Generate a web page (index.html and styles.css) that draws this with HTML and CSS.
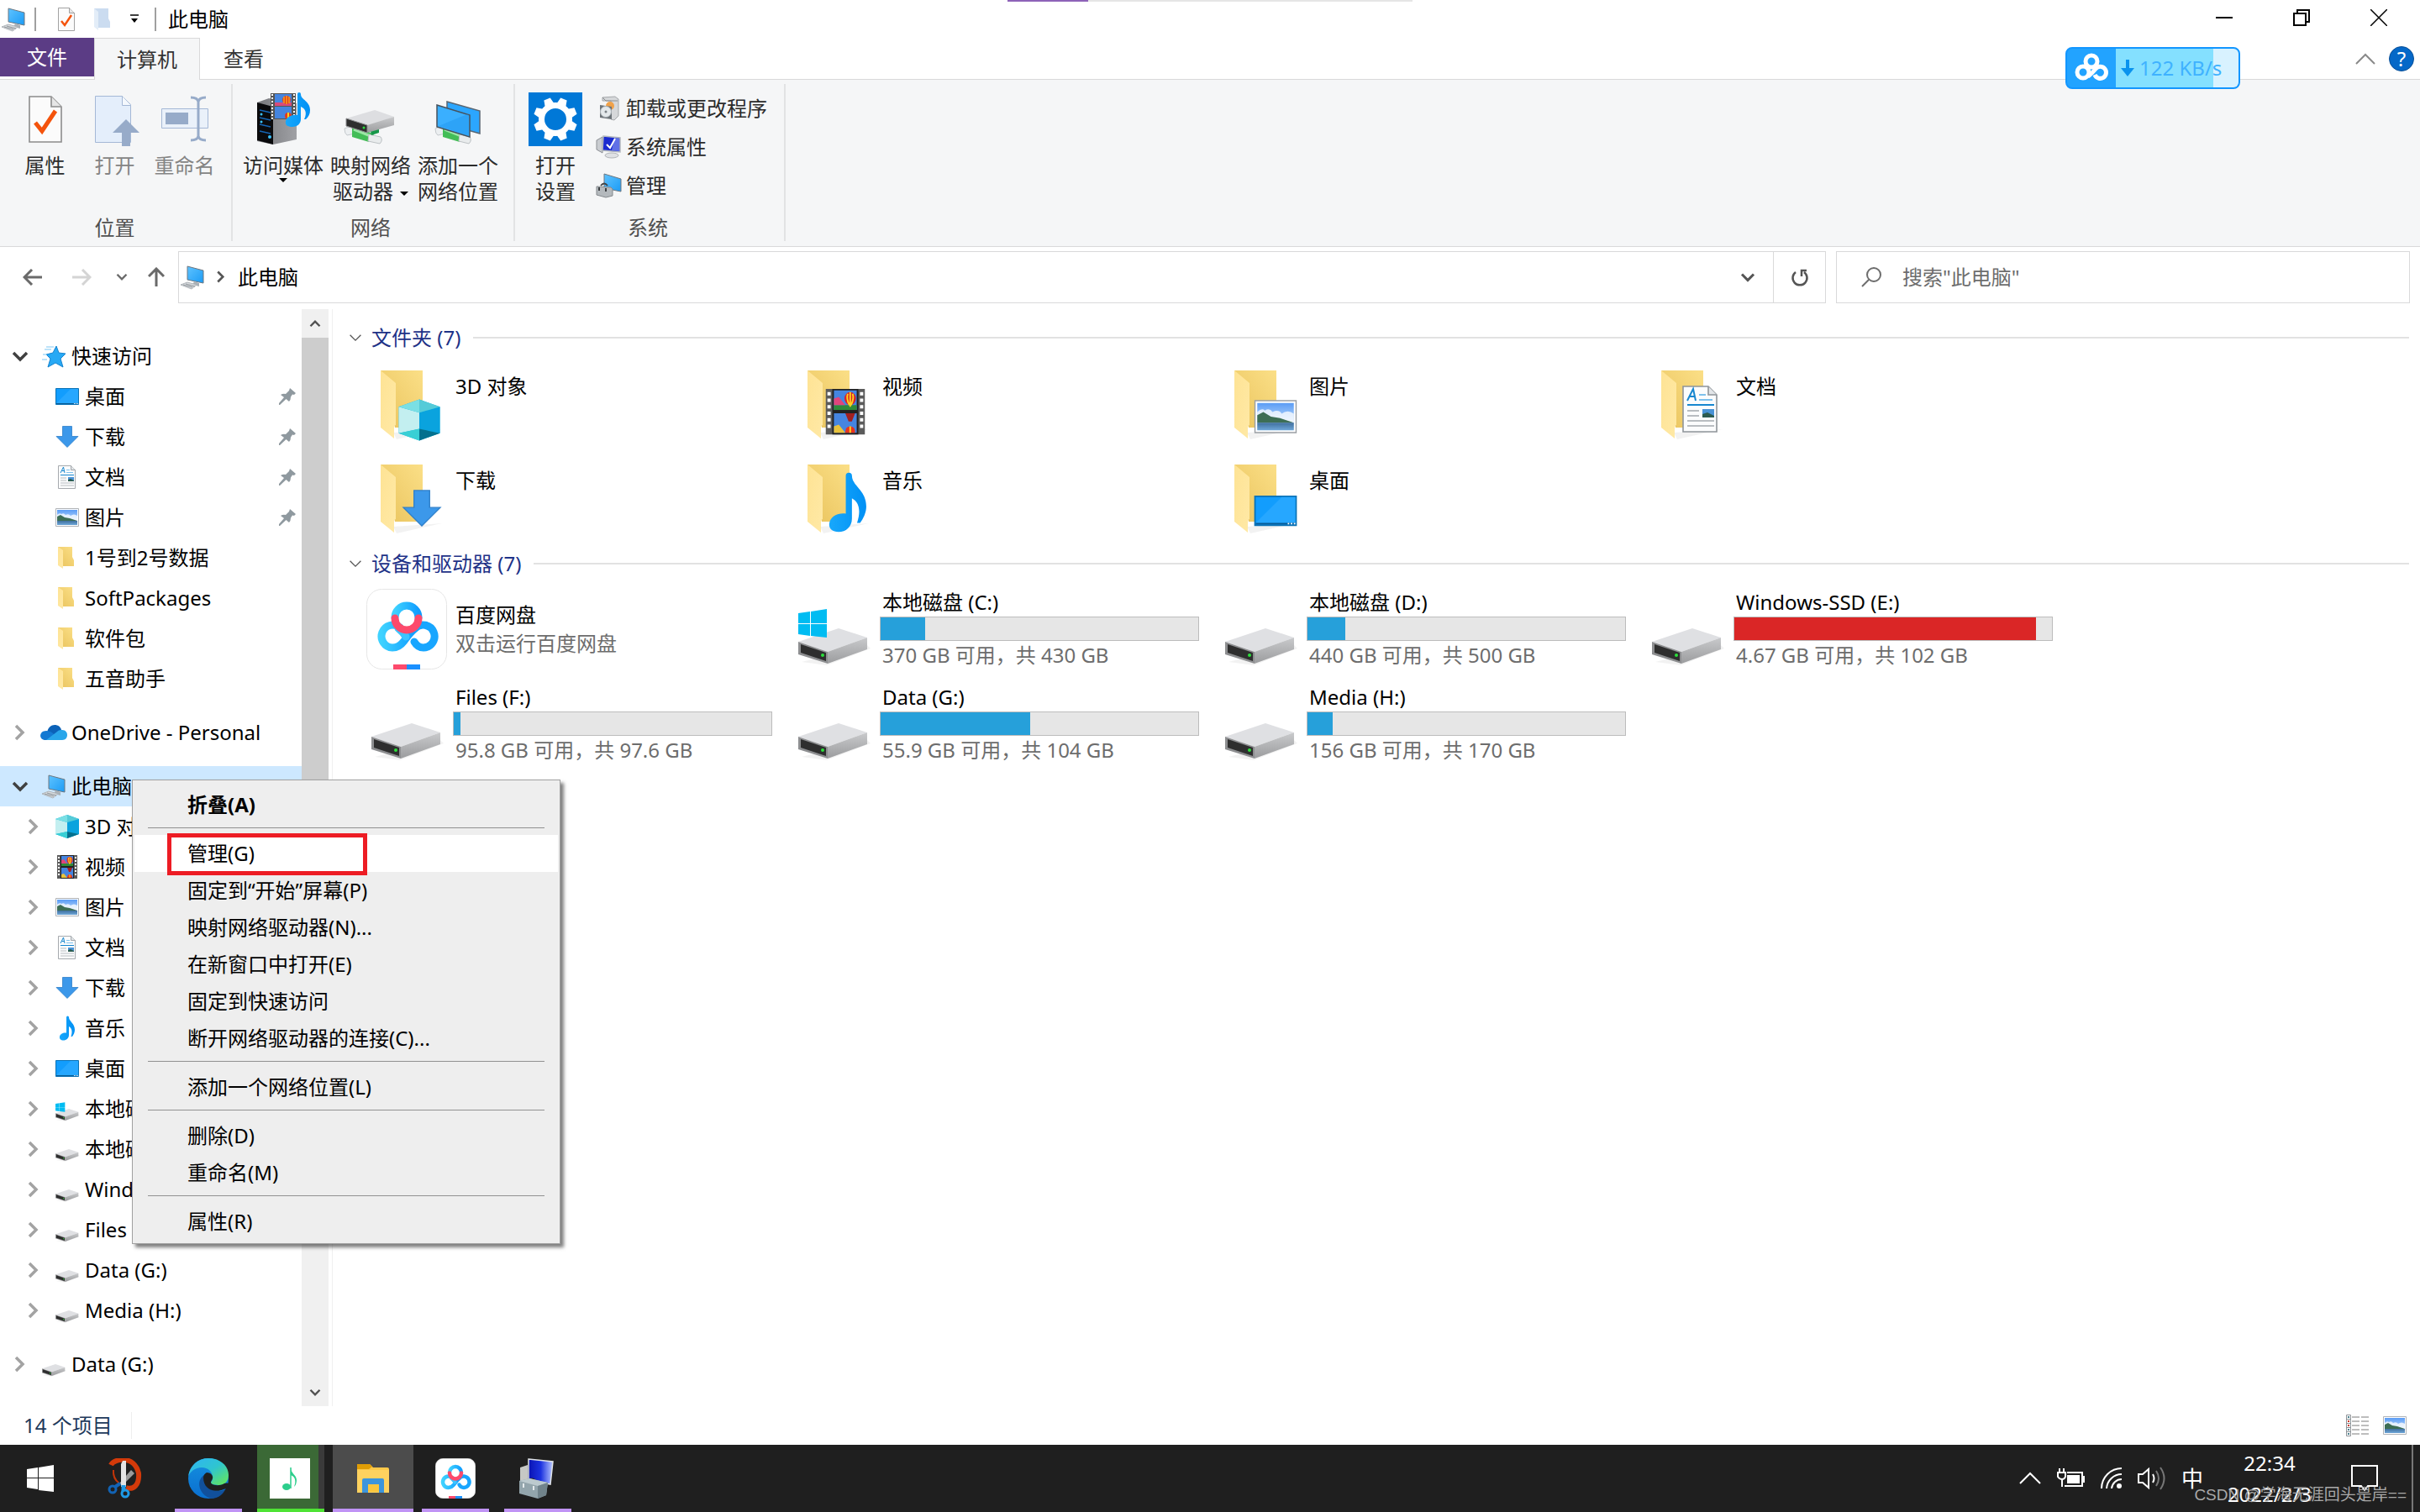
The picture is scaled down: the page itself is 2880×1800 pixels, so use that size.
FILE: index.html
```html
<!DOCTYPE html>
<html lang="zh-CN">
<head>
    <meta charset="UTF-8">
    <meta name="viewport" content="width=device-width, initial-scale=1.0">
    <title>此电脑</title>
    <link rel="stylesheet" href="styles.css">
</head>
<body>
    <!-- Icon sprite -->
    <svg class="sprite" aria-hidden="true">
        <defs>
            <linearGradient id="gFolderBack" x1="0" y1="1" x2="1" y2="0"><stop offset="0" stop-color="#e9c35c"/><stop offset="1" stop-color="#fbdf87"/></linearGradient>
            <linearGradient id="gFolderFront" x1="0" y1="0" x2="1" y2="1"><stop offset="0" stop-color="#fee394"/><stop offset="1" stop-color="#ffe9a6"/></linearGradient>
            <linearGradient id="gScreen" x1="0" y1="0" x2="1" y2="1"><stop offset="0" stop-color="#5fc3ff"/><stop offset="1" stop-color="#1b9bf5"/></linearGradient>
            <linearGradient id="gSky" x1="0" y1="0" x2="0" y2="1"><stop offset="0" stop-color="#5a9cf5"/><stop offset="1" stop-color="#e8f5ff"/></linearGradient>
            <linearGradient id="gSea" x1="0" y1="0" x2="0" y2="1"><stop offset="0" stop-color="#3f6f9e"/><stop offset="1" stop-color="#6fa7d8"/></linearGradient>
            <linearGradient id="gSide" x1="0" y1="0" x2="0" y2="1"><stop offset="0" stop-color="#c9cacc"/><stop offset="1" stop-color="#9b9c9e"/></linearGradient>
            <linearGradient id="gNote" x1="0" y1="0" x2="1" y2="0"><stop offset="0" stop-color="#18a8fb"/><stop offset="1" stop-color="#0090f5"/></linearGradient>
            <linearGradient id="gBaidu" x1="0" y1="0" x2="1" y2="0"><stop offset="0" stop-color="#3fd2ff"/><stop offset="1" stop-color="#109dff"/></linearGradient>
            <linearGradient id="gEdgeTop" x1="0" y1="0" x2="1" y2="1"><stop offset="0" stop-color="#2fb4f5"/><stop offset=".5" stop-color="#2fc5d0"/><stop offset="1" stop-color="#6ae94e"/></linearGradient>
            <linearGradient id="gEdgeLow" x1="0" y1="0" x2="0" y2="1"><stop offset="0" stop-color="#1590df"/><stop offset="1" stop-color="#0a6fd0"/></linearGradient>
            <linearGradient id="gBlueScreen" x1="0" y1="0" x2="1" y2="0"><stop offset="0" stop-color="#0a14b4"/><stop offset=".5" stop-color="#1c33e0"/><stop offset="1" stop-color="#b9c8ff"/></linearGradient>
            <linearGradient id="gTower" x1="0" y1="0" x2="1" y2="0"><stop offset="0" stop-color="#77787c"/><stop offset="1" stop-color="#a0a1a5"/></linearGradient>
        </defs>

        <symbol id="pc" viewBox="0 0 32 32">
            <path d="M10 3l19 5v15l-19-4z" fill="url(#gScreen)" stroke="#6d7780"/>
            <path d="M18 21l6 2v4l-8-2z" fill="#a9b0b6"/>
            <path d="M2 25l8-3 11 3-6 5z" fill="#d9dcdf" stroke="#aeb3b8"/>
            <path d="M5 25l11 3M8 24l11 3" stroke="#8f959a" fill="none"/>
        </symbol>
        <symbol id="checkdoc" viewBox="0 0 32 32">
            <path d="M6.500 2.500h13l6 6v21h-19z" fill="#fbfbfb" stroke="#8c8c8c" stroke-width=".8"/>
            <path d="M19.500 2.500v6h6" fill="#e6e6e6" stroke="#8c8c8c" stroke-width=".8"/>
            <path d="M10 18l4 5 8-12" fill="none" stroke="#f4530c" stroke-width="2.500"/>
        </symbol>
        <symbol id="folder" viewBox="0 0 32 32">
            <path d="M5 3h17v12l2 4v7H8z" fill="url(#gFolderBack)"/>
            <path d="M5 3l6 4v22l-6-4z" fill="url(#gFolderFront)"/>
        </symbol>
        <symbol id="folder-pale" viewBox="0 0 32 32">
            <path d="M5 3h17v12l2 4v7H8z" fill="#cbdcf0"/>
            <path d="M5 3l5 4v22l-5-4z" fill="#e3edf8"/>
        </symbol>
        <symbol id="star" viewBox="0 0 32 32">
            <path d="M19 4l3 8 8 1-6 6 3 10-9-5-9 5 3-10-5-5 8-2z" fill="#27a9f5" stroke="#1583cf"/>
            <path d="M7 5h9M5 8h8M3 14h5M2 20h6" stroke="#7cc8f5" stroke-width="1"/>
        </symbol>
        <symbol id="desktop" viewBox="0 0 32 32">
            <path d="M2.500 6.500h27v19h-27z" fill="#129dfd" stroke="#0b72b5"/>
            <path d="M3 24L20 7h9v17z" fill="#2fabff" opacity=".7"/>
            <path d="M3 24.500h26" stroke="#085c96"/>
            <path d="M24 24.500h1m1 0h1m1 0h1" stroke="#fff"/>
        </symbol>
        <symbol id="download" viewBox="0 0 32 32">
            <path d="M10.500 3.500h11v12h7.500l-13 13-13-13h7.500z" fill="#3c98ea" stroke="#2f7fc9" stroke-width=".8"/>
        </symbol>
        <symbol id="doc" viewBox="0 0 32 32">
            <path d="M5.500 2.500h15l5 5v22h-20z" fill="#fbfcfd" stroke="#8f9499" stroke-width=".8"/>
            <path d="M20.500 2.500v5h5" fill="#e2e5e8" stroke="#8f9499" stroke-width=".8"/>
            <path d="M8 11l3.500-7 1.500 7M9.500 8.500h3" fill="none" stroke="#1787cf"/>
            <path d="M15 7.500h4M15 10.500h8" stroke="#7fc1ec"/>
            <path d="M8 13.500h16" stroke="#1787cf"/>
            <path d="M8 17h7M8 20h7M8 23h16M8 26h16" stroke="#b9bdc1"/>
            <path d="M17 16h7v5h-7z" fill="#4a93d6"/>
            <path d="M17 19l3-1 4 2v1h-7z" fill="#2c5c50"/>
        </symbol>
        <symbol id="picture" viewBox="0 0 32 32">
            <path d="M2.500 5.500h27v21h-27z" fill="#fff" stroke="#9a9fa4" stroke-width=".8"/>
            <path d="M4 7h24v18H4z" fill="url(#gSky)"/>
            <path d="M4 13q3-3 5-1 3-2 5 1 4-2 6 1 4-3 8 0v6H4z" fill="#fff" opacity=".75"/>
            <path d="M4 15l4-2 5 3 6 1 9 3H4z" fill="#3d6e55"/>
            <path d="M4 20h24v5H4z" fill="url(#gSea)"/>
        </symbol>
        <symbol id="cube" viewBox="0 0 32 32">
            <path d="M16 2l14 5v18l-14 5-14-5V7z" fill="#18b5dc"/>
            <path d="M2 7l14 4v11L2 25z" fill="#c3eff0"/>
            <path d="M30 7l-14 4v11l14 3z" fill="#0aa3de"/>
            <path d="M16 2l14 5-14 4z" fill="#55cbd8"/>
            <path d="M16 2L2 7l14 4z" fill="#7adfe4"/>
            <path d="M2 25l14-3v8z" fill="#39cfd5"/>
            <path d="M30 25l-14-3v8z" fill="#04708e"/>
        </symbol>
        <symbol id="film" viewBox="0 0 32 32">
            <path d="M4 2h24v28H4z" fill="#5b5b5b"/>
            <path d="M6 4v24M26 4v24" stroke="#fff" stroke-width="2" stroke-dasharray="2 2"/>
            <path d="M8 2h16v28H8z" fill="#222"/>
            <path d="M9 3h14v12H9zM9 17h14v12H9z" fill="#4585e0"/>
            <path d="M9 12h14v3H9z" fill="#2f8a3a"/>
            <path d="M9 8l3-1 4 5H9z" fill="#e0457c"/>
            <path d="M9 25l3-1 4 5H9z" fill="#e8c23c"/>
            <ellipse cx="19" cy="8" rx="3.500" ry="4" fill="#d8202a"/>
            <path d="M19 4v9M17.500 5q-1 3 1 7M20.500 5q1 3-1 7" stroke="#ffd21e" fill="none"/>
            <path d="M16 17h6l-2 5h-2z" fill="#a22020"/>
            <path d="M16 29q0-4 3-4t3 4z" fill="#e8341e"/>
            <path d="M19 25v4" stroke="#ffd21e"/>
        </symbol>
        <symbol id="note" viewBox="0 0 32 32">
            <path d="M15 3q0-1.500 1.500-1.500T18 3c0 5 7 7 7 15 0 3-1.500 6-3 8h-1.500c2-6 1-10-2.500-12v10c0 4-3 6.500-6.500 6.500S6.500 28.500 7 26c.5-3 4-5 8-4.500z" fill="url(#gNote)"/>
        </symbol>
        <symbol id="drive" viewBox="0 0 96 96">
            <path d="M10 88l30 4 52-20-4-4z" fill="#000" opacity=".05"/>
            <path d="M6 64l48-16 34 11-47 17z" fill="#dfe0e3"/>
            <path d="M88 59v14L41 90V76z" fill="url(#gSide)"/>
            <path d="M6 64l35 12v14L6 79z" fill="#8d8e90"/>
            <path d="M9 67l30 10v10L9 77z" fill="#2e2e2e"/>
            <circle cx="35" cy="80" r="2" fill="#2be03a"/>
        </symbol>
        <symbol id="windrive" viewBox="0 0 96 96">
            <use href="#drive" width="96" height="96"/>
            <path d="M6 30l14-2v14H6zM21 28l19-3v17H21zM6 43h14v14l-14-2zM21 43h19v16l-19-2z" fill="#00bcf2"/>
        </symbol>
        <symbol id="onedrive" viewBox="0 0 32 32">
            <path d="M8 16c1-6 5-9 9-9s7 2 8 6l-8 8z" fill="#0c62b8"/>
            <path d="M6 25c-8 0-8-11 1-11 3 0 6 1 8 3l8 8z" fill="#1379d2"/>
            <path d="M7 25l13-10c2-2 4-2 6-2 8 0 8 12 0 12z" fill="#29a6ea"/>
        </symbol>
        <symbol id="chev-right" viewBox="0 0 16 20">
            <path d="M3 2l8 8-8 8" fill="none" stroke="currentColor" stroke-width="3.500"/>
        </symbol>
        <symbol id="chev-down" viewBox="0 0 20 16">
            <path d="M2 4l8 8 8-8" fill="none" stroke="currentColor" stroke-width="3.500"/>
        </symbol>
        <symbol id="chev-thin" viewBox="0 0 20 12">
            <path d="M2 2l8 8 8-8" fill="none" stroke="currentColor" stroke-width="1.600"/>
        </symbol>
        <symbol id="pin" viewBox="0 0 20 20">
            <path d="M13 0l7 6-2 2-2-.5-2 3q0 4-2 5.500L8.500 13 1 20H0v-2l6-7-4-3q3-2 6-1l4-4z" fill="#8f999f"/>
        </symbol>

        <!-- Folder tiles: the open folder with a badge in the lower right -->
        <symbol id="bigfolder" viewBox="0 0 96 96">
            <path d="M32 84l58-4-54 12z" fill="#000" opacity=".05"/>
            <path d="M17 10h50v68H34z" fill="url(#gFolderBack)"/>
            <path d="M17 10l18 15v50l-2 1v15L17 78z" fill="url(#gFolderFront)"/>
        </symbol>
        <symbol id="baidu" viewBox="0 0 96 96">
            <rect x=".5" y=".5" width="95" height="95" rx="18" fill="#fff" stroke="#e6e6e6"/>
            <g fill="none" stroke-width="9" stroke-linecap="round">
                <path d="M58 47q-6 5-13 15-6 8-14 8a13.500 13.500 0 1 1 9-24" stroke="url(#gBaidu)"/>
                <path d="M38 47q5 4 9 10" stroke="#3cc4ff"/>
                <path d="M57 63q4 7 11 7a13.500 13.500 0 1 0-10-23" stroke="#18a6ff"/>
                <path d="M34 34a14 14 0 0 1 28 0" stroke="url(#gBaidu)"/>
                <path d="M34 35a14 14 0 0 0 28 0" stroke="#fd4a6c"/>
            </g>
            <path d="M32 90h16v6H32z" fill="#fd4a6c"/>
            <path d="M48 90h16v6H48z" fill="#1a90ff"/>
        </symbol>

        <!-- Ribbon -->
        <symbol id="r-open" viewBox="0 0 64 64">
            <path d="M8.500 4.500h32l10 10v45h-42z" fill="#e4eefb" stroke="#a4b8d6"/>
            <path d="M40.500 4.500v11h10" fill="#f4f8fd" stroke="#a4b8d6"/>
            <path d="M45 32l16 16H50v16H40V48H29z" fill="#97abc9"/>
        </symbol>
        <symbol id="r-rename" viewBox="0 0 64 64">
            <path d="M4.500 19.500h55v23h-55z" fill="#eaf1fa" stroke="#a4b8d6"/>
            <path d="M9 24h27v14H9z" fill="#97abc9"/>
            <path d="M39 6q8 0 9 5 1-5 9-5M48 10v42M39 57q8 0 9-5 1 5 9 5" fill="none" stroke="#97abc9" stroke-width="3"/>
        </symbol>
        <symbol id="r-media" viewBox="0 0 64 64">
            <path d="M1 12l14-5 33 6v43L20 62 1 58z" fill="url(#gTower)"/>
            <path d="M1 12l19 5v45L1 57z" fill="#0a0a0c"/>
            <path d="M4 21l13 3M4 30l13 3M4 38l13 3M4 46l13 3" stroke="#1565b5" stroke-width="1.500"/>
            <circle cx="16" cy="53" r="2" fill="#3ac2ff"/>
            <circle cx="6" cy="26" r="1.500" fill="#3ac2ff"/><circle cx="6" cy="35" r="1.500" fill="#3ac2ff"/>
            <path d="M17 1h30v31H17z" fill="#555"/>
            <path d="M19 2v30M45 2v30" stroke="#fff" stroke-width="2" stroke-dasharray="2 2"/>
            <path d="M22 2h20v14H22zM22 17h20v14H22z" fill="#4585e0"/>
            <path d="M22 12h20v4H22z" fill="#d84a7c"/>
            <circle cx="36" cy="9" r="5" fill="#e33a1d"/><path d="M36 4v10M33 5v8M39 5v8" stroke="#ffd21e"/>
            <circle cx="38" cy="28" r="4" fill="#e33a1d"/><path d="M38 24v7" stroke="#ffd21e" stroke-width="2"/>
            <path d="M49 2q0-2 2-2t2 2c0 7 11 8 11 19 0 5-2 8-5 11h-2c4-8 1-13-4-15v15c0 5-4 9-10 9s-9-2-8-7c1-5 8-8 14-7z" fill="url(#gNote)"/>
        </symbol>
        <symbol id="r-mapdrive" viewBox="0 0 64 64">
            <path d="M1 43l8-3 4 9-9 2q-3-2-3-8z" fill="#eceff1" stroke="#c4c9cc"/>
            <path d="M10 41l12 2 14 7-6 9-20-6z" fill="#43bd57"/>
            <path d="M12 44l20 8" stroke="#9be6a5" stroke-width="3"/>
            <path d="M30 50l14 3q3 4-1 8l-14-3z" fill="#e9eced" stroke="#bcc1c4"/>
            <path d="M32 46l10-3v5l-9 3z" fill="#17974a"/>
            <path d="M3 31l34-10 23 8-32 12z" fill="#dddee1"/>
            <path d="M60 29v10L28 48v-9z" fill="url(#gSide)"/>
            <path d="M3 31l25 8v9L3 40z" fill="#2e2e2e" stroke="#8d8e90"/>
            <circle cx="24" cy="42" r="1.500" fill="#2be03a"/>
        </symbol>
        <symbol id="r-addnet" viewBox="0 0 64 64">
            <path d="M5 43l8-3 4 9-9 2q-3-2-3-8z" fill="#eceff1" stroke="#c4c9cc"/>
            <path d="M14 41l12 2 14 7-6 9-20-6z" fill="#43bd57"/>
            <path d="M16 44l20 8" stroke="#9be6a5" stroke-width="3"/>
            <path d="M34 50l12 3q3 4-1 8l-12-3z" fill="#e9eced" stroke="#bcc1c4"/>
            <path d="M19 11l39 11v27l-39-11z" fill="#2ba6ff" stroke="#596673" stroke-width="1.500"/>
            <path d="M7 15l39 12v26L7 41z" fill="#3aafff" stroke="#47525c" stroke-width="1.500"/>
            <path d="M9 40l34-14 2 1v25z" fill="#1f98f0" opacity=".5"/>
        </symbol>
        <symbol id="r-gear" viewBox="0 0 64 64">
            <path d="M0 0h64v64H0z" fill="#0078d7"/>
            <circle cx="32" cy="32" r="16.500" fill="none" stroke="#fff" stroke-width="7"/>
            <g fill="#fff" transform="rotate(22.500 32 32)">
                <path id="tooth" d="M28 6h8l2 9H26z"/>
                <use href="#tooth" transform="rotate(45 32 32)"/>
                <use href="#tooth" transform="rotate(90 32 32)"/>
                <use href="#tooth" transform="rotate(135 32 32)"/>
                <use href="#tooth" transform="rotate(180 32 32)"/>
                <use href="#tooth" transform="rotate(225 32 32)"/>
                <use href="#tooth" transform="rotate(270 32 32)"/>
                <use href="#tooth" transform="rotate(315 32 32)"/>
            </g>
        </symbol>
        <symbol id="r-uninstall" viewBox="0 0 32 32">
            <path d="M8 3l15-1 4 3v20l-5 5-4-1V7H8z" fill="#d6d8da" stroke="#a5a8ab"/>
            <path d="M8 3l4 4h14" fill="none" stroke="#8b8e91"/>
            <circle cx="17" cy="13" r="5" fill="#f0a24a"/>
            <path d="M5 12l14 2v15L5 27z" fill="#6c7378"/>
            <circle cx="12" cy="20" r="6.500" fill="#e4e9ec" stroke="#a9b0b5"/>
            <circle cx="12" cy="20" r="1.500" fill="#7b8287"/>
        </symbol>
        <symbol id="r-sysprop" viewBox="0 0 32 32">
            <path d="M1 8l7-4v19l-7-4z" fill="#c9ccd0" stroke="#8c9095"/>
            <path d="M9 3l20 2v17L8 20z" fill="#1a2bd0" stroke="#b4b9be" stroke-width="1.500"/>
            <path d="M22 5l6 1v15l-9-1z" fill="#8f9ef5" opacity=".6"/>
            <path d="M13 13l4 4 6-11" fill="none" stroke="#fff" stroke-width="2"/>
            <ellipse cx="19" cy="26" rx="8" ry="3" fill="#dfe1e4" stroke="#b1b4b8"/>
        </symbol>
        <symbol id="r-manage" viewBox="0 0 32 32">
            <path d="M10 2l20 6v15l-20-4z" fill="url(#gScreen)" stroke="#6d7780"/>
            <path d="M6 16q4-5 8 0" fill="none" stroke="#444" stroke-width="2"/>
            <path d="M1 17l17 1 2 2v8l-8 2-11-3z" fill="#b4b9bd" stroke="#84898d"/>
            <path d="M4 18v4M12 19v4" stroke="#3c3f42" stroke-width="2"/>
        </symbol>

        <!-- Taskbar -->
        <symbol id="t-start" viewBox="0 0 32 32">
            <path d="M0 5l13-2v12H0zM14 3l18-3v15H14zM0 16h13v13L0 27zM14 16h18v16l-18-2z" fill="#fff"/>
        </symbol>
        <symbol id="t-snip" viewBox="0 0 48 48">
            <path d="M6 8c4-8 28-12 33 10 1 14-6 20-15 17" fill="none" stroke="#d33a0a" stroke-width="6"/>
            <path d="M9 14q-1 10 7 16" fill="none" stroke="#c03408" stroke-width="2"/>
            <path d="M30 14l4 4-14 14-4-2z" fill="#9b9b9b"/>
            <path d="M20 3l4 0v31h-6V7z" fill="#e4e4e4"/>
            <circle cx="8" cy="37" r="4" fill="none" stroke="#1263b4" stroke-width="3"/>
            <path d="M11 34l6-4" stroke="#1263b4" stroke-width="4"/>
            <circle cx="23" cy="42" r="4" fill="none" stroke="#1e9ae6" stroke-width="3"/>
            <path d="M21 32v7" stroke="#1e9ae6" stroke-width="5"/>
        </symbol>
        <symbol id="t-edge" viewBox="0 0 48 48">
            <circle cx="24" cy="24" r="24" fill="url(#gEdgeLow)"/>
            <path d="M0 22C2 8 12 0 24 0c14 0 24 9 24 20 0 8-5 12-12 12-5 0-9-1-9-3 0-1 2-2 2-6C29 16 24 11 16 11 8 11 2 16 0 22z" fill="url(#gEdgeTop)"/>
            <path d="M19 20c-12 8-4 27 10 28 8-1 13-6 15-11-6 4-25 4-25-17z" fill="#11509c"/>
            <path d="M18 23c0-3 2-5 4-6 5 0 8 4 7 7-1 3-2 3-2 5 0 3 10 5 16 1 3-1 6-1 5 3l-2 3-4 1c-8 4-24 2-24-14z" fill="#1f1f1f"/>
        </symbol>
        <symbol id="t-music" viewBox="0 0 48 48">
            <path d="M0 0h48v48H0z" fill="#fff"/>
            <path d="M25 11v25" stroke="#2cce8c" stroke-width="1.500"/>
            <path d="M25 11c0 7 7 9 7 15q0 5-3 8 4-11-4-14z" fill="#2cce8c"/>
            <ellipse cx="20" cy="34" rx="5" ry="4" fill="#2cce8c"/>
        </symbol>
        <symbol id="t-explorer" viewBox="0 0 48 48">
            <path d="M5 9q0-2 2-2h13l4 4h17q2 0 2 2v27H5z" fill="#fdc94a"/>
            <path d="M5 7h15l3 3-4 3H5z" fill="#e09d05"/>
            <path d="M5 14h38v27H5z" fill="#fed25f"/>
            <path d="M11 26q0-2 2-2h22q2 0 2 2v15h-6V31H18v10h-7z" fill="#3c95dc"/>
            <path d="M18 31h13v9H18z" fill="#fbc63d"/>
        </symbol>
        <symbol id="t-computer" viewBox="0 0 48 48">
            <path d="M3 11l9-3v22l-9 3z" fill="#c6c8c5"/>
            <path d="M13 1l29 3-3 27-26-5z" fill="url(#gBlueScreen)" stroke="#e0e3e6" stroke-width="1.500"/>
            <path d="M13 28q3-7 10 0" fill="none" stroke="#2b2b2b" stroke-width="2"/>
            <path d="M2 27l12-3 22 5-2 15-10 4L2 42z" fill="#93a5ac"/>
            <path d="M2 27l12-3 22 5-12 4z" fill="#bccace"/>
            <path d="M24 33l12-4-2 15-10 4z" fill="#71838b"/>
            <path d="M7 30v5M19 33v5" stroke="#e4eaec" stroke-width="2"/>
        </symbol>
    </svg>

    <header class="titlebar">
        <svg class="icon"><use href="#pc"/></svg>
        <span class="title-sep"></span>
        <button class="quick" aria-label="属性"><svg class="icon"><use href="#checkdoc"/></svg></button>
        <button class="quick" aria-label="新建文件夹"><svg class="icon"><use href="#folder-pale"/></svg></button>
        <button class="quick quick-more" aria-label="自定义快速访问工具栏"><svg width="12" height="12" viewBox="0 0 12 12"><path d="M1 1h10" stroke="#000" stroke-width="1.500"/><path d="M2 5h8l-4 5z"/></svg></button>
        <span class="title-sep"></span>
        <h1 class="title">此电脑</h1>
        <div class="window-buttons">
            <button aria-label="最小化"><svg width="20" height="20" viewBox="0 0 20 20"><path d="M0 10h20" stroke="#000" stroke-width="2"/></svg></button>
            <button aria-label="还原"><svg width="20" height="20" viewBox="0 0 20 20"><path d="M1 5h14v14H1zM5 5V1h14v14h-4" fill="none" stroke="#000" stroke-width="2"/></svg></button>
            <button aria-label="关闭"><svg width="20" height="20" viewBox="0 0 20 20"><path d="M0 0l20 20M20 0L0 20" stroke="#000" stroke-width="1.500"/></svg></button>
        </div>
    </header>

    <nav class="tabs">
        <button class="tab tab-file">文件</button>
        <button class="tab tab-active">计算机</button>
        <button class="tab">查看</button>
        <div class="tabs-right">
            <button aria-label="最小化功能区"><svg width="24" height="14" viewBox="0 0 24 14"><path d="M1 13L12 2l11 11" fill="none" stroke="#8a8a8a" stroke-width="2"/></svg></button>
            <button class="help" aria-label="帮助">?</button>
        </div>
    </nav>

    <section class="ribbon">
        <div class="ribbon-group group-location">
            <div class="ribbon-items">
                <button class="big-btn"><svg class="icon-lg"><use href="#checkdoc"/></svg>属性</button>
                <button class="big-btn" disabled><svg class="icon-lg"><use href="#r-open"/></svg>打开</button>
                <button class="big-btn" disabled><svg class="icon-lg"><use href="#r-rename"/></svg>重命名</button>
            </div>
            <p class="group-name">位置</p>
        </div>
        <div class="ribbon-group group-network">
            <div class="ribbon-items">
                <button class="big-btn"><svg class="icon-lg"><use href="#r-media"/></svg>访问媒体<span class="caret"></span></button>
                <button class="big-btn"><svg class="icon-lg"><use href="#r-mapdrive"/></svg>映射网络<br>驱动器<span class="caret caret-inline"></span></button>
                <button class="big-btn"><svg class="icon-lg"><use href="#r-addnet"/></svg>添加一个<br>网络位置</button>
            </div>
            <p class="group-name">网络</p>
        </div>
        <div class="ribbon-group group-system">
            <div class="ribbon-items">
                <button class="big-btn"><svg class="icon-lg"><use href="#r-gear"/></svg>打开<br>设置</button>
                <div class="small-btns">
                    <button><svg class="icon"><use href="#r-uninstall"/></svg>卸载或更改程序</button>
                    <button><svg class="icon"><use href="#r-sysprop"/></svg>系统属性</button>
                    <button><svg class="icon"><use href="#r-manage"/></svg>管理</button>
                </div>
            </div>
            <p class="group-name">系统</p>
        </div>
    </section>

    <div class="navbar">
        <button class="nav-btn" aria-label="后退"><svg width="24" height="20" viewBox="0 0 24 20"><path d="M23 10H2M11 1l-9 9 9 9" fill="none" stroke="#6a6a6a" stroke-width="3"/></svg></button>
        <button class="nav-btn" aria-label="前进"><svg width="24" height="20" viewBox="0 0 24 20"><path d="M1 10h21M13 1l9 9-9 9" fill="none" stroke="#d4d4d4" stroke-width="3"/></svg></button>
        <button class="nav-btn nav-recent" aria-label="最近浏览的位置"><svg width="14" height="11"><use href="#chev-down"/></svg></button>
        <button class="nav-btn nav-up" aria-label="向上"><svg width="20" height="24" viewBox="0 0 20 24"><path d="M10 23V2M1 11l9-9 9 9" fill="none" stroke="#6a6a6a" stroke-width="3"/></svg></button>
        <div class="address">
            <svg class="icon"><use href="#pc"/></svg>
            <svg class="crumb-arrow" width="12" height="15"><use href="#chev-right"/></svg>
            <a class="crumb" href="#">此电脑</a>
            <button class="address-drop" aria-label="以前的位置"><svg width="20" height="14"><use href="#chev-down"/></svg></button>
            <button class="refresh" aria-label="刷新"><svg width="22" height="24" viewBox="0 0 22 24"><path d="M6 6a8.500 8.500 0 1 0 10 0M19 4h-6v7" fill="none" stroke="#555" stroke-width="2.500"/></svg></button>
        </div>
        <div class="search">
            <svg width="26" height="26" viewBox="0 0 26 26"><circle cx="16" cy="10" r="8" fill="none" stroke="#6d6d6d" stroke-width="2"/><path d="M10 16l-8 8" stroke="#6d6d6d" stroke-width="2"/></svg>
            <input type="text" aria-label="搜索" placeholder="搜索&quot;此电脑&quot;">
        </div>
    </div>

    <main class="main">
        <aside class="sidebar">
            <ul class="tree">
                <li class="node root"><svg class="open-arrow"><use href="#chev-down"/></svg><svg class="icon"><use href="#star"/></svg>快速访问</li>
                <li class="node"><svg class="icon"><use href="#desktop"/></svg>桌面<svg class="pin"><use href="#pin"/></svg></li>
                <li class="node"><svg class="icon"><use href="#download"/></svg>下载<svg class="pin"><use href="#pin"/></svg></li>
                <li class="node"><svg class="icon"><use href="#doc"/></svg>文档<svg class="pin"><use href="#pin"/></svg></li>
                <li class="node"><svg class="icon"><use href="#picture"/></svg>图片<svg class="pin"><use href="#pin"/></svg></li>
                <li class="node"><svg class="icon"><use href="#folder"/></svg>1号到2号数据</li>
                <li class="node"><svg class="icon"><use href="#folder"/></svg>SoftPackages</li>
                <li class="node"><svg class="icon"><use href="#folder"/></svg>软件包</li>
                <li class="node"><svg class="icon"><use href="#folder"/></svg>五音助手</li>
            </ul>
            <ul class="tree">
                <li class="node root"><svg class="arrow"><use href="#chev-right"/></svg><svg class="icon"><use href="#onedrive"/></svg>OneDrive - Personal</li>
            </ul>
            <ul class="tree">
                <li class="node root selected"><svg class="open-arrow"><use href="#chev-down"/></svg><svg class="icon"><use href="#pc"/></svg>此电脑</li>
                <li class="node"><svg class="arrow"><use href="#chev-right"/></svg><svg class="icon"><use href="#cube"/></svg>3D 对象</li>
                <li class="node"><svg class="arrow"><use href="#chev-right"/></svg><svg class="icon"><use href="#film"/></svg>视频</li>
                <li class="node"><svg class="arrow"><use href="#chev-right"/></svg><svg class="icon"><use href="#picture"/></svg>图片</li>
                <li class="node"><svg class="arrow"><use href="#chev-right"/></svg><svg class="icon"><use href="#doc"/></svg>文档</li>
                <li class="node"><svg class="arrow"><use href="#chev-right"/></svg><svg class="icon"><use href="#download"/></svg>下载</li>
                <li class="node"><svg class="arrow"><use href="#chev-right"/></svg><svg class="icon"><use href="#note"/></svg>音乐</li>
                <li class="node"><svg class="arrow"><use href="#chev-right"/></svg><svg class="icon"><use href="#desktop"/></svg>桌面</li>
                <li class="node"><svg class="arrow"><use href="#chev-right"/></svg><svg class="icon"><use href="#windrive"/></svg>本地磁盘 (C:)</li>
                <li class="node"><svg class="arrow"><use href="#chev-right"/></svg><svg class="icon"><use href="#drive"/></svg>本地磁盘 (D:)</li>
                <li class="node"><svg class="arrow"><use href="#chev-right"/></svg><svg class="icon"><use href="#drive"/></svg>Windows-SSD (E:)</li>
                <li class="node"><svg class="arrow"><use href="#chev-right"/></svg><svg class="icon"><use href="#drive"/></svg>Files (F:)</li>
                <li class="node"><svg class="arrow"><use href="#chev-right"/></svg><svg class="icon"><use href="#drive"/></svg>Data (G:)</li>
                <li class="node"><svg class="arrow"><use href="#chev-right"/></svg><svg class="icon"><use href="#drive"/></svg>Media (H:)</li>
            </ul>
            <ul class="tree">
                <li class="node root"><svg class="arrow"><use href="#chev-right"/></svg><svg class="icon"><use href="#drive"/></svg>Data (G:)</li>
            </ul>
        </aside>
        <div class="scrollbar">
            <button class="scroll-up" aria-label="向上滚动"><svg width="14" height="11"><use href="#chev-down"/></svg></button>
            <div class="thumb"></div>
            <button class="scroll-down" aria-label="向下滚动"><svg width="14" height="11"><use href="#chev-down"/></svg></button>
        </div>

        <div class="content">
            <h2 class="group-header"><svg width="16" height="10"><use href="#chev-thin"/></svg>文件夹 (7)</h2>
            <div class="tiles">
                <div class="tile folder-tile"><svg viewBox="0 0 96 96"><use href="#bigfolder"/><use href="#cube" x="35" y="41" width="56" height="56"/></svg><p>3D 对象</p></div>
                <div class="tile folder-tile"><svg viewBox="0 0 96 96"><use href="#bigfolder"/><use href="#film" x="31" y="28" width="62" height="62"/></svg><p>视频</p></div>
                <div class="tile folder-tile"><svg viewBox="0 0 96 96"><use href="#bigfolder"/><use href="#picture" x="37" y="36" width="58" height="58"/></svg><p>图片</p></div>
                <div class="tile folder-tile"><svg viewBox="0 0 96 96"><use href="#bigfolder"/><use href="#doc" x="32" y="24" width="64" height="64"/></svg><p>文档</p></div>
                <div class="tile folder-tile"><svg viewBox="0 0 96 96"><use href="#bigfolder"/><use href="#download" x="39" y="35" width="54" height="54"/></svg><p>下载</p></div>
                <div class="tile folder-tile"><svg viewBox="0 0 96 96"><use href="#bigfolder"/><use href="#note" x="26" y="16" width="78" height="78"/></svg><p>音乐</p></div>
                <div class="tile folder-tile"><svg viewBox="0 0 96 96"><use href="#bigfolder"/><use href="#desktop" x="37" y="36" width="58" height="58"/></svg><p>桌面</p></div>
            </div>

            <h2 class="group-header"><svg width="16" height="10"><use href="#chev-thin"/></svg>设备和驱动器 (7)</h2>
            <div class="tiles">
                <div class="tile app-tile"><svg><use href="#baidu"/></svg><div class="info"><p>百度网盘</p><p class="sub">双击运行百度网盘</p></div></div>
                <div class="tile"><svg><use href="#windrive"/></svg><div class="info"><p>本地磁盘 (C:)</p><div class="bar"><div class="fill" style="width: 14%"></div></div><p class="sub">370 GB 可用，共 430 GB</p></div></div>
                <div class="tile"><svg><use href="#drive"/></svg><div class="info"><p>本地磁盘 (D:)</p><div class="bar"><div class="fill" style="width: 12%"></div></div><p class="sub">440 GB 可用，共 500 GB</p></div></div>
                <div class="tile"><svg><use href="#drive"/></svg><div class="info"><p>Windows-SSD (E:)</p><div class="bar"><div class="fill full" style="width: 95%"></div></div><p class="sub">4.67 GB 可用，共 102 GB</p></div></div>
                <div class="tile"><svg><use href="#drive"/></svg><div class="info"><p>Files (F:)</p><div class="bar"><div class="fill" style="width: 2%"></div></div><p class="sub">95.8 GB 可用，共 97.6 GB</p></div></div>
                <div class="tile"><svg><use href="#drive"/></svg><div class="info"><p>Data (G:)</p><div class="bar"><div class="fill" style="width: 47%"></div></div><p class="sub">55.9 GB 可用，共 104 GB</p></div></div>
                <div class="tile"><svg><use href="#drive"/></svg><div class="info"><p>Media (H:)</p><div class="bar"><div class="fill" style="width: 8%"></div></div><p class="sub">156 GB 可用，共 170 GB</p></div></div>
            </div>
        </div>
    </main>

    <div class="statusbar">
        <span class="count">14 个项目</span>
        <button class="view-btn" aria-label="详细信息"><svg width="28" height="28" viewBox="0 0 28 28"><path d="M.5 1.500h5v25h-5zM.5 6.500h5M.5 11.500h5M.5 16.500h5M.5 21.500h5" fill="none" stroke="#8f9499"/><path d="M2 4h2M2 19h2M2 24h2" stroke="#4a7f8c" stroke-width="2"/><path d="M2 9h2M2 14h2" stroke="#c8392b" stroke-width="2"/><path d="M7 4h9M18 4h9M7 9h9M18 9h9M7 14h9M18 14h9M7 19h9M18 19h9M7 24h9M18 24h9" stroke="#7c7c7c"/></svg></button>
        <button class="view-btn" aria-label="大图标"><svg class="icon"><use href="#picture"/></svg></button>
    </div>

    <footer class="taskbar">
        <button class="task task-start" aria-label="开始"><svg width="32" height="32"><use href="#t-start"/></svg></button>
        <button class="task" aria-label="截图工具"><svg><use href="#t-snip"/></svg></button>
        <button class="task running" aria-label="Microsoft Edge"><svg><use href="#t-edge"/></svg></button>
        <button class="task running task-music" aria-label="音乐"><svg><use href="#t-music"/></svg></button>
        <button class="task running task-active" aria-label="文件资源管理器"><svg><use href="#t-explorer"/></svg></button>
        <button class="task running" aria-label="百度网盘"><svg><use href="#baidu"/></svg></button>
        <button class="task running" aria-label="计算机管理"><svg><use href="#t-computer"/></svg></button>
        <div class="tray">
            <button aria-label="显示隐藏的图标"><svg width="28" height="16" viewBox="0 0 28 16"><path d="M2 14L14 2l12 12" fill="none" stroke="#fff" stroke-width="2"/></svg></button>
            <svg width="34" height="24" viewBox="0 0 34 24"><path d="M9 5h21v16H9M30 10h2v6h-2" fill="none" stroke="#fff" stroke-width="2"/><path d="M12 8h15v10H12z" fill="#fff"/><path d="M0 3h12v7q-1 4-4 4v9H4v-9q-4 0-4-4z" fill="#1f1f1f"/><path d="M1 5h9v5q-1 3-4 3t-5-3zM3 0v5M8 0v5M6 13v9" fill="none" stroke="#fff" stroke-width="2"/></svg>
            <svg width="26" height="26" viewBox="0 0 26 26"><g fill="none" stroke="#fff" stroke-width="2"><path d="M1 25A24 24 0 0 1 25 1M7 25A18 18 0 0 1 25 8M13 25a12 12 0 0 1 12-11"/></g><circle cx="22" cy="22" r="3" fill="#fff"/></svg>
            <svg width="34" height="28" viewBox="0 0 34 28"><path d="M1 9h5l7-6v22l-7-6H1z" fill="none" stroke="#fff" stroke-width="2"/><path d="M18 9q3 5 0 10" fill="none" stroke="#fff" stroke-width="2"/><path d="M22 5q6 9 0 18M27 1q9 13 0 26" fill="none" stroke="#777" stroke-width="2"/></svg>
            <span class="ime">中</span>
            <div class="clock"><span>22:34</span><span>2022/2/3</span></div>
            <button class="notify" aria-label="通知"><svg width="32" height="32" viewBox="0 0 32 32"><path d="M1 1h30v24H20l-4 5-4-5H1z" fill="none" stroke="#fff" stroke-width="2"/></svg></button>
            <span class="show-desktop"></span>
        </div>
    </footer>

    <!-- Overlays -->
    <div class="top-progress"><span></span></div>
    <div class="speed">
        <svg width="58" height="48" viewBox="0 0 58 48"><g fill="none" stroke="#fff" stroke-width="5"><circle cx="29" cy="15" r="7"/><circle cx="19" cy="28" r="7"/><path d="M33 31a7 7 0 1 0 1-7q-4 5-9 9"/></g></svg>
        <div class="speed-text"><svg width="18" height="20" viewBox="0 0 18 20"><path d="M9 0v12" stroke="#0a93ee" stroke-width="4"/><path d="M1 10h16l-8 10z" fill="#0a93ee"/></svg>122 KB/s</div>
    </div>

    <div class="context-menu">
        <button class="default">折叠(A)</button>
        <hr>
        <button class="hover">管理(G)<span class="mark"></span></button>
        <button>固定到“开始”屏幕(P)</button>
        <button>映射网络驱动器(N)...</button>
        <button>在新窗口中打开(E)</button>
        <button>固定到快速访问</button>
        <button>断开网络驱动器的连接(C)...</button>
        <hr>
        <button>添加一个网络位置(L)</button>
        <hr>
        <button>删除(D)</button>
        <button>重命名(M)</button>
        <hr>
        <button>属性(R)</button>
    </div>

    <div class="watermark">CSDN @学海无涯回头是岸==</div>
</body>
</html>
```

FILE: styles.css
```css
:root {
    --line: #d9d9da;
    --ribbon: #f5f6f7;
    --purple: #c093f5;
    --gray-text: #6d6d6d;
}

* {
    box-sizing: border-box;
}

body {
    position: relative;
    display: flex;
    flex-direction: column;
    min-height: 100vh;
    margin: 0;
    background: #fff;
    color: #000;
    font-family: "Noto Sans", "Noto Sans CJK SC", sans-serif;
    font-size: 24px;
    line-height: 32px;
}

button {
    display: flex;
    align-items: center;
    justify-content: center;
    padding: 0;
    border: none;
    background: none;
    color: inherit;
    font: inherit;
}

h1, h2, p, ul {
    margin: 0;
    padding: 0;
    font-size: 24px;
    font-weight: 400;
}

ul {
    list-style: none;
}

svg {
    flex: none;
}

.sprite {
    position: absolute;
    width: 0;
    height: 0;
}

.icon {
    width: 32px;
    height: 32px;
}

/* Title bar */
.titlebar {
    display: flex;
    align-items: center;
    height: 45px;
}

.title-sep {
    width: 2px;
    height: 28px;
    margin: 0 14px 0 9px;
    background: #a0a0a0;
}

.quick {
    width: 44px;
    height: 32px;
}

.quick-more {
    width: 30px;
}

.window-buttons {
    display: flex;
    align-self: flex-start;
    margin-left: auto;
    padding-right: 3px;
}

.window-buttons button {
    width: 92px;
    height: 42px;
}

/* Tabs */
.tabs {
    display: flex;
    height: 50px;
    border-bottom: 1px solid var(--line);
}

.tab {
    width: 104px;
    color: #333;
}

.tab-file {
    width: 112px;
    height: 46px;
    background: #5b3c85;
    color: #fff;
}

.tab-active {
    width: 126px;
    height: 50px;
    border: 1px solid var(--line);
    border-bottom: none;
    background: var(--ribbon);
}

.tabs-right {
    display: flex;
    align-items: center;
    gap: 16px;
    margin-left: auto;
    padding-right: 7px;
}

.help {
    width: 30px;
    height: 30px;
    border: 1px solid #0a4f96;
    border-radius: 50%;
    background: #0568c8;
    color: #fff;
}

/* Ribbon */
.ribbon {
    display: flex;
    height: 199px;
    padding: 5px 0 6px;
    border-bottom: 1px solid var(--line);
    background: var(--ribbon);
}

.ribbon-group {
    display: flex;
    flex-direction: column;
    justify-content: space-between;
    border-right: 2px solid #e2e3e4;
}

.ribbon-items {
    display: flex;
    align-items: flex-start;
}

.big-btn {
    display: block;
    padding-top: 10px;
    color: #2b2b2b;
    line-height: 31px;
    text-align: center;
}

.big-btn:disabled {
    color: #848484;
}

.big-btn .icon-lg {
    display: block;
    width: 64px;
    height: 64px;
    margin: 0 auto 7px;
}

.group-location {
    padding: 0 14px 0 12px;
}

.group-location .big-btn {
    width: 83px;
}

.group-network {
    padding: 0 14px 0 8px;
}

.group-network .big-btn {
    width: 104px;
}

.group-system {
    padding: 0 20px 0 16px;
}

.group-system .big-btn {
    width: 64px;
}

.caret {
    display: block;
    width: 0;
    margin: 0 auto;
    border: 5px solid transparent;
    border-top-color: #000;
    border-bottom: none;
}

.caret-inline {
    display: inline-block;
    margin: 0 0 4px 8px;
}

.small-btns {
    display: flex;
    flex-direction: column;
    gap: 14px;
    margin-left: 16px;
    padding-top: 13px;
}

.small-btns button {
    justify-content: flex-start;
    gap: 4px;
    color: #2b2b2b;
}

.group-name {
    color: #505050;
    text-align: center;
}

/* Navigation bar */
.navbar {
    display: flex;
    align-items: center;
    height: 74px;
    padding: 0 12px 3px 10px;
}

.nav-btn {
    width: 58px;
    height: 60px;
    color: #6a6a6a;
}

.nav-recent {
    width: 38px;
}

.nav-up {
    width: 44px;
    margin-right: 4px;
}

.address, .search {
    display: flex;
    align-items: center;
    height: 62px;
    border: 1px solid var(--line);
}

.address {
    flex: 3;
    color: #555;
}

.crumb-arrow {
    margin: 0 14px 0 12px;
}

.crumb {
    color: #000;
    text-decoration: none;
}

.address-drop {
    width: 60px;
    height: 60px;
    margin-left: auto;
}

.refresh {
    width: 62px;
    height: 60px;
    border-left: 1px solid var(--line);
}

.search {
    flex: 1;
    gap: 24px;
    margin-left: 12px;
    padding-left: 28px;
}

.search input {
    flex: 1;
    min-width: 0;
    padding: 0;
    border: none;
    outline: none;
    background: none;
    color: #000;
    font: inherit;
}

.search input::placeholder {
    color: var(--gray-text);
    opacity: 1;
}

/* Main area */
.main {
    display: flex;
    flex: 1;
}

.sidebar {
    width: 359px;
    padding-top: 32px;
}

.tree {
    margin-bottom: 16px;
}

.node {
    display: flex;
    align-items: center;
    gap: 5px;
    height: 48px;
    padding-left: 64px;
    white-space: nowrap;
}

.root {
    padding-left: 48px;
}

.selected {
    background: #cde8ff;
}

.arrow, .open-arrow {
    width: 16px;
    height: 20px;
    margin-left: -32px;
    margin-right: 11px;
    color: #a3a3a3;
}

.open-arrow {
    width: 20px;
    margin-left: -34px;
    margin-right: 9px;
    color: #404040;
}

.pin {
    width: 20px;
    height: 20px;
    margin-left: auto;
    margin-right: 7px;
}

.scrollbar {
    display: flex;
    flex-direction: column;
    width: 32px;
    background: #f0f0f0;
    color: #505050;
}

.scrollbar button {
    height: 34px;
}

.scroll-up svg {
    transform: rotate(180deg);
}

.thumb {
    flex: 1;
    margin-bottom: 300px;
    background: #cdcdcd;
}

.content {
    flex: 1;
    margin-left: 4px;
    padding: 18px 13px 0 19px;
    border-left: 1px solid #f0f0f0;
}

.group-header {
    display: flex;
    align-items: center;
    gap: 11px;
    margin-bottom: 13px;
    color: #1e3287;
}

.group-header svg {
    color: #555;
}

.group-header::after {
    content: "";
    flex: 1;
    height: 2px;
    margin-left: 4px;
    background: #e2e2e2;
}

.tiles {
    display: grid;
    grid-template-columns: repeat(auto-fill, 508px);
    gap: 16px 0;
    margin: 0 0 16px 21px;
}

.tile {
    display: flex;
    gap: 7px;
}

.tile > svg {
    width: 96px;
    height: 96px;
}

.tile p {
    padding-left: 3px;
    line-height: 34px;
}

.folder-tile p {
    padding-top: 12px;
}

.app-tile {
    align-items: center;
}

.info {
    width: 380px;
}

.bar {
    height: 29px;
    border: 1px solid #bcbcbc;
    background: #e6e6e6;
}

.fill {
    height: 100%;
    background: #26a0da;
}

.full {
    background: #da2626;
}

.tile .sub {
    color: var(--gray-text);
}

/* Status bar */
.statusbar {
    display: flex;
    align-items: center;
    height: 46px;
    padding: 0 14px 0 28px;
    color: #1e395b;
}

.count {
    margin-right: auto;
    padding-right: 22px;
    border-right: 1px solid #eee;
}

.view-btn {
    width: 44px;
    height: 40px;
}

.view-btn:last-child {
    width: 32px;
    margin-left: 6px;
}

/* Taskbar */
.taskbar {
    display: flex;
    height: 80px;
    background: #1f1f1f;
    color: #fff;
}

.task {
    width: 80px;
    margin-right: 18px;
    padding-top: 4px;
    border-bottom: 4px solid transparent;
}

.task svg {
    width: 48px;
    height: 48px;
}

.task-start {
    width: 96px;
    margin-right: 14px;
}

.task-start svg {
    width: 32px;
    height: 32px;
}

.running {
    border-bottom-color: var(--purple);
}

.task-music {
    margin-right: 10px;
    padding-right: 2px;
    border-bottom-color: #4fe335;
    background: linear-gradient(to right, #3b6936 73px, #3a3a3a 73px) padding-box;
}

.task-active {
    width: 96px;
    margin-right: 10px;
    background: #4c4c4c padding-box;
}

.tray {
    display: flex;
    align-items: center;
    gap: 18px;
    margin-left: auto;
}

.ime {
    font-size: 26px;
}

.clock {
    display: flex;
    flex-direction: column;
    width: 122px;
    line-height: 37px;
    text-align: center;
}

.notify {
    margin: 0 22px 0 18px;
}

.show-desktop {
    align-self: stretch;
    width: 10px;
    border-left: 2px solid #777;
}

/* Overlays */
.top-progress {
    position: absolute;
    top: 0;
    left: 1199px;
    width: 482px;
    height: 2px;
    background: #e5e5e5;
}

.top-progress span {
    display: block;
    width: 20%;
    height: 2px;
    background: #8e63b8;
}

.speed {
    position: absolute;
    top: 56px;
    right: 214px;
    display: flex;
    width: 208px;
    height: 50px;
    overflow: hidden;
    border: 2px solid #1296ff;
    border-radius: 8px;
    background: #22a3ff;
}

.speed-text {
    display: flex;
    flex: 1;
    align-items: center;
    gap: 5px;
    padding-left: 5px;
    background: linear-gradient(to right, #84e0ff 116px, #d8f2ff 116px);
    color: #3fb2ff;
    white-space: nowrap;
}

.context-menu {
    position: absolute;
    top: 928px;
    left: 157px;
    width: 510px;
    padding: 7px 2px 4px;
    border: 1px solid #a0a0a0;
    background: #eee;
    box-shadow: 4px 4px 4px rgba(0, 0, 0, 0.5);
}

.context-menu button {
    position: relative;
    justify-content: flex-start;
    width: 100%;
    height: 44px;
    padding-left: 63px;
}

.context-menu .default {
    font-weight: 700;
}

.context-menu .hover {
    background: #fff;
}

.context-menu hr {
    height: 1px;
    margin: 5px 16px 8px;
    border: none;
    background: #919191;
}

.mark {
    position: absolute;
    top: -2px;
    left: 39px;
    width: 238px;
    height: 50px;
    border: 5px solid #ed1c24;
}

.watermark {
    position: absolute;
    right: 16px;
    bottom: 6px;
    color: #a9a9a9;
    font-family: "Liberation Sans", "Noto Sans CJK SC", sans-serif;
    font-size: 19px;
    line-height: 28px;
}
```
